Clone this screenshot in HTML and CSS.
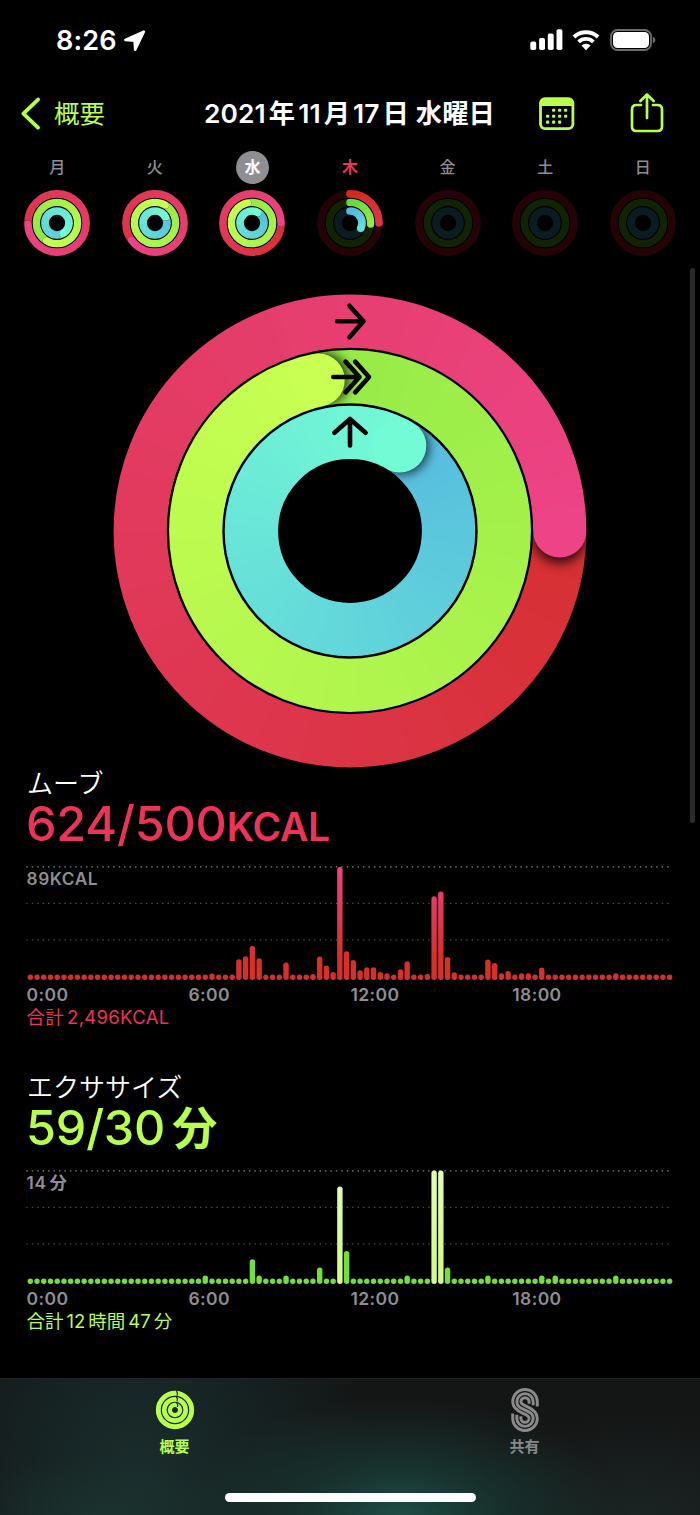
FILE: index.html
```html
<!DOCTYPE html>
<html lang="ja">
<head>
    <meta charset="utf-8">
    <meta name="viewport" content="width=device-width, initial-scale=1.0">
    <title>アクティビティ</title>
    <link rel="stylesheet" href="styles.css">
</head>
<body>
    <!-- Status bar -->
    <div class="status-bar">
        <span class="clock">8:26</span>
        <svg class="location" width="24" height="24" viewBox="0 0 24 24"><path d="M20.8 3.6 L2.4 12 L11.6 12.8 L12.2 21.6 Z" fill="#fff" stroke="#fff" stroke-width="2.6" stroke-linejoin="round"/></svg>
        <svg class="signal" width="34" height="22" viewBox="0 0 34 22" fill="#fff">
            <rect x="0.3" y="12.6" width="5.9" height="8.4" rx="1.8"/>
            <rect x="9.1" y="9" width="5.9" height="12" rx="1.8"/>
            <rect x="17.8" y="4.6" width="5.9" height="16.4" rx="1.8"/>
            <rect x="26.5" y="0.3" width="5.9" height="20.7" rx="1.8"/>
        </svg>
        <svg class="wifi" width="28" height="22" viewBox="0 0 28 22">
            <path d="M2 8 A17.5 17.5 0 0 1 26 8" fill="none" stroke="#fff" stroke-width="4"/>
            <path d="M6.6 12.8 A10.8 10.8 0 0 1 21.4 12.8" fill="none" stroke="#fff" stroke-width="3.8"/>
            <path d="M14 21.2 L9.4 16.6 A6.6 6.6 0 0 1 18.6 16.6 Z" fill="#fff"/>
        </svg>
        <svg class="battery" width="46" height="22" viewBox="0 0 46 22">
            <rect x="1" y="1" width="40" height="20" rx="6.5" fill="none" stroke="#6e6e6e" stroke-width="1.8"/>
            <rect x="3" y="3" width="36" height="16" rx="4.5" fill="#fff"/>
            <path d="M42.8 7.6 Q45.4 8.8 45.4 11 T42.8 14.6 Z" fill="#6e6e6e"/>
        </svg>
    </div>

    <!-- Navigation -->
    <div class="nav">
        <svg class="back" width="22" height="34" viewBox="0 0 22 34"><path d="M18 2.6 L3.4 16.6 L18 30.6" fill="none" stroke="#b9fd4f" stroke-width="3.8" stroke-linecap="round" stroke-linejoin="round"/></svg>
        <span class="back-label">概要</span>
        <span class="date">2021<i></i>年<i></i>11<i></i>月<i></i>17<i></i>日 水曜日</span>
        <svg class="calendar" width="36" height="34" viewBox="0 0 36 34">
            <rect x="1.5" y="1.6" width="32.4" height="30" rx="4.5" fill="none" stroke="#b9fd4f" stroke-width="2.8"/>
            <path d="M1 9 V6 Q1 1 6 1 H29 Q34.4 1 34.4 6 V9 Z" fill="#b9fd4f"/>
            <g fill="#b9fd4f">
                <rect x="13.1" y="11.7" width="3.1" height="3.1" rx=".8"/><rect x="19.1" y="11.7" width="3.1" height="3.1" rx=".8"/><rect x="25.1" y="11.7" width="3.1" height="3.1" rx=".8"/>
                <rect x="7.1" y="17.7" width="3.1" height="3.1" rx=".8"/><rect x="13.1" y="17.7" width="3.1" height="3.1" rx=".8"/><rect x="19.1" y="17.7" width="3.1" height="3.1" rx=".8"/><rect x="25.1" y="17.7" width="3.1" height="3.1" rx=".8"/>
                <rect x="7.1" y="23.6" width="3.1" height="3.1" rx=".8"/><rect x="13.1" y="23.6" width="3.1" height="3.1" rx=".8"/><rect x="19.1" y="23.6" width="3.1" height="3.1" rx=".8"/>
            </g>
        </svg>
        <svg class="share" width="34" height="42" viewBox="0 0 34 42" fill="none" stroke="#b9fd4f" stroke-width="2.7" stroke-linecap="round" stroke-linejoin="round">
            <path d="M11 12 H6.5 Q2 12 2 16.5 V33.5 Q2 38 6.5 38 H27.5 Q32 38 32 33.5 V16.5 Q32 12 27.5 12 H23"/>
            <path d="M17 25 V1.9 M10.4 8 L17 1.5 L23.6 8"/>
        </svg>
    </div>

    <!-- Week strip -->
    <div class="week">
        <div class="day"><span>月</span><svg class="mini" data-rings="628,571,510"></svg></div>
        <div class="day"><span>火</span><svg class="mini" data-rings="594,750,420"></svg></div>
        <div class="day selected"><span>水</span><svg class="mini" data-rings="450,708,390"></svg></div>
        <div class="day today"><span>木</span><svg class="mini" data-rings="90,93,116"></svg></div>
        <div class="day"><span>金</span><svg class="mini" data-rings="0,0,0"></svg></div>
        <div class="day"><span>土</span><svg class="mini" data-rings="0,0,0"></svg></div>
        <div class="day"><span>日</span><svg class="mini" data-rings="0,0,0"></svg></div>
    </div>

    <!-- Main rings -->
    <div class="rings"><svg id="big-rings"></svg></div>

    <!-- Move -->
    <div class="metric move">
        <div class="name">ムーブ</div>
        <div class="value">624/500<span class="unit">KCAL</span></div>
        <div class="chart">
            <svg id="move-chart"></svg>
            <span class="max">89KCAL</span>
        </div>
        <div class="hours"><span>0:00</span><span>6:00</span><span>12:00</span><span>18:00</span></div>
        <div class="total">合計<i></i>2,496KCAL</div>
    </div>

    <!-- Exercise -->
    <div class="metric exercise">
        <div class="name">エクササイズ</div>
        <div class="value">59/30<span class="unit">分</span></div>
        <div class="chart">
            <svg id="exercise-chart"></svg>
            <span class="max">14<i></i>分</span>
        </div>
        <div class="hours"><span>0:00</span><span>6:00</span><span>12:00</span><span>18:00</span></div>
        <div class="total">合計<i></i>12<i></i>時間<i></i>47<i></i>分</div>
    </div>

    <div class="scrollbar"></div>

    <!-- Tab bar -->
    <div class="tab-bar">
        <div class="tab active">
            <svg width="40" height="44" viewBox="-20 -22 40 44" fill="none" stroke="#b9fd4f">
                <circle r="16.7" stroke-width="4.9"/>
                <circle r="10.7" stroke-width="4.7"/>
                <circle r="5.1" stroke-width="4.2"/>
                <path d="M1.4 -19.6 Q3.2 -17 2 -14.2 M1.4 -13.4 Q3.2 -11 2 -8.4 M1.4 -7.6 Q3.4 -5.4 2.4 -3" stroke="#15211f" stroke-width="1.1"/>
            </svg>
            <span>概要</span>
        </div>
        <div class="tab">
            <svg width="28" height="44" viewBox="0 0 27 43" fill="none" stroke="#8a8a8a" stroke-width="2.9">
                <path d="M25.5 18.2 V13.5 A12 12 0 0 0 1.5 13.5 C1.5 20 7 22.8 11.5 24.8 C14.5 26.2 17.5 27.2 17.5 29.5 A4 4 0 0 1 9.5 29.5 V27.6"/>
                <path d="M21.5 16.8 V13.5 A8 8 0 0 0 5.5 13.5 C5.5 18 9 19.5 13.5 21.5 S21.5 25 21.5 29.5 A8 8 0 0 1 5.5 29.5 V26.2"/>
                <path d="M17.5 15.4 V13.5 A4 4 0 0 0 9.5 13.5 C9.5 15.8 12.5 16.8 15.5 18.2 C20 20.2 25.5 23 25.5 29.5 A12 12 0 0 1 1.5 29.5 V24.8"/>
            </svg>
            <span>共有</span>
        </div>
        <div class="home-indicator"></div>
    </div>

    <script src="script.js"></script>
</body>
</html>
```
FILE: styles.css
```css
* {
    box-sizing: border-box;
}
body {
    margin: 0;
    width: 700px;
    height: 1515px;
    position: relative;
    overflow: hidden;
    background: #000;
    color: #fff;
    font-family: Inter, "Noto Sans CJK JP", sans-serif;
}
svg {
    display: block;
    flex: none;
}
/* Thin space between digits and kanji */
i {
    display: inline-block;
    width: 3px;
}
.status-bar {
    display: flex;
    align-items: center;
    height: 80px;
    padding: 0 44px 0 56px;
}
.clock {
    font-size: 27px;
    font-weight: 600;
    width: 67px;
    height: 32px;
    line-height: 34px;
    letter-spacing: 0.2px;
}
.signal {
    margin-left: auto;
}
.wifi {
    margin-left: 8px;
}
.battery {
    margin-left: 10px;
}
.nav {
    display: flex;
    align-items: center;
    height: 67px;
    padding: 0 36px 0 20px;
}
.back-label {
    margin-left: 12px;
    font-size: 25.5px;
    line-height: 36px;
    color: #b9fd4f;
    width: 150px;
}
.date {
    font-size: 26.3px;
    font-weight: 600;
    line-height: 36px;
    white-space: nowrap;
    letter-spacing: 0.12px;
    width: 335px;
}
.share {
    margin-left: auto;
}
.week {
    display: flex;
    height: 110px;
    padding: 4px 8.5px 0;
}
.day {
    flex: 1;
    display: flex;
    flex-direction: column;
    align-items: center;
    gap: 6px;
}
.day span {
    width: 33px;
    height: 33px;
    line-height: 32px;
    border-radius: 50%;
    text-align: center;
    font-size: 16px;
    font-weight: 500;
    color: #8e8e93;
}
.day.selected span {
    background: #8e8e93;
    color: #fff;
    font-weight: 700;
}
.day.today span {
    color: #ea3458;
    font-weight: 700;
}
.mini {
    width: 66px;
    height: 66px;
    overflow: visible;
}
.rings {
    display: flex;
    justify-content: center;
    padding-top: 34px;
    height: 511px;
}
#big-rings {
    width: 480px;
    height: 480px;
}
.metric {
    height: 304px;
    padding: 0 26px;
}
.name {
    font-size: 26px;
    font-weight: 350;
    line-height: 32px;
    height: 31px;
    padding-left: 1px;
}
.value {
    display: flex;
    align-items: baseline;
    height: 52px;
    line-height: 49px;
    font-size: 48.5px;
    font-weight: 500;
    letter-spacing: -0.2px;
}
.unit {
    font-size: 39px;
    font-weight: 600;
}
.exercise .unit {
    font-size: 45px;
    margin-left: 7px;
}
.move .value, .move .total {
    color: #ea3458;
}
.exercise .value, .exercise .total {
    color: #b9fd4f;
}
.chart {
    position: relative;
    height: 114px;
    margin-top: 15px;
}
.chart svg {
    width: 648px;
    height: 114px;
}
.max {
    position: absolute;
    left: 0.6px;
    top: 2px;
    font-size: 17.3px;
    line-height: 22px;
    font-weight: 600;
    color: #8e8e93;
    letter-spacing: 0.55px;
}
.grid-line {
    stroke: #484848;
    stroke-width: 1.4;
    stroke-dasharray: 1.5 3.93;
}
.grid-line.top {
    stroke: #858585;
}
.move .bar {
    fill: url(#move-gradient);
}
.exercise .bar {
    fill: #74de3c;
}
.exercise .bar.high {
    fill: url(#exercise-gradient);
}
.hours {
    display: grid;
    grid-template-columns: repeat(4, 161.9px);
    height: 24px;
    line-height: 30px;
    padding-left: 0.6px;
    font-size: 17.5px;
    font-weight: 600;
    color: #8e8e93;
    letter-spacing: 0.4px;
}
.total {
    font-size: 18.5px;
    line-height: 26px;
    padding-left: 0.5px;
}
.move .total {
    letter-spacing: 0.3px;
}
.scrollbar {
    position: absolute;
    left: 690px;
    top: 268px;
    width: 5px;
    height: 555px;
    border-radius: 3px;
    background: #2b2b2c;
}
.tab-bar {
    position: absolute;
    left: 0;
    top: 1378px;
    width: 700px;
    height: 137px;
    display: flex;
    border-top: 1px solid #222;
    background:
        radial-gradient(ellipse 220px 120px at 400px 137px, #1d4c45 0, rgba(24, 54, 49, 0.8) 45%, rgba(20, 30, 30, 0) 100%),
        radial-gradient(ellipse 150px 60px at 95px 137px, rgba(28, 56, 50, 0.6) 0, rgba(28, 56, 50, 0) 100%),
        radial-gradient(ellipse 260px 320px at 140px 100px, #1a2d2c 0, rgba(23, 38, 38, 0.85) 40%, rgba(20, 24, 24, 0) 90%),
        radial-gradient(ellipse 180px 110px at 640px 137px, #1b2423 0, rgba(20, 22, 22, 0) 100%),
        #141515;
}
.tab {
    flex: 1;
    display: flex;
    flex-direction: column;
    align-items: center;
    padding: 9px 1px 0 0;
    font-size: 15px;
    font-weight: 700;
    line-height: 30px;
    color: #8a8a8a;
}
.tab.active {
    color: #b9fd4f;
}
.home-indicator {
    position: absolute;
    left: 225px;
    top: 114px;
    width: 251px;
    height: 9px;
    border-radius: 5px;
    background: #fff;
}
```
FILE: script.js
```js
var COLORS = {
    move: { from: [209, 42, 29], to: [236, 68, 134], track: "#240305" },
    exercise: { from: [102, 216, 62], to: [200, 255, 82], track: "#122304" },
    stand: { from: [84, 183, 223], to: [115, 251, 213], track: "#0a1c22" }
};
var NAMES = ["move", "exercise", "stand"];
var maskId = 0;

function mix(a, b, t) {
    return "rgb(" + a.map(function (v, i) { return Math.round(v + (b[i] - v) * t); }).join(",") + ")";
}

function point(r, deg) {
    var a = (deg - 90) * Math.PI / 180;
    return [(r * Math.cos(a)).toFixed(3), (r * Math.sin(a)).toFixed(3)];
}

// Arc built of overlapping segments so the colour can follow the angle
function arc(r, w, start, end, c, tone) {
    var out = "";
    for (var d = start; d < end; d += 3) {
        var p = point(r, d), q = point(r, Math.min(d + 20, end));
        out += '<path d="M' + p + "A" + r + " " + r + " 0 0 1 " + q + '" fill="none" stroke="' + mix(c.from, c.to, tone(d)) + '" stroke-width="' + (w + 1) + '"/>';
    }
    return out;
}

function dot(r, w, deg, fill, extra) {
    var p = point(r, deg);
    return '<circle cx="' + p[0] + '" cy="' + p[1] + '" r="' + w / 2 + '" fill="' + fill + '"' + (extra || "") + "/>";
}

function ring(r, w, deg, c, blur) {
    var track = '<circle r="' + r + '" fill="none" stroke="' + c.track + '" stroke-width="' + w + '"/>';
    if (!deg) return track;
    // The mask keeps both edges of the ring smooth
    var id = "ring" + maskId++;
    var box = r + w;
    var open = '<mask id="' + id + '" maskUnits="userSpaceOnUse" x="' + -box + '" y="' + -box + '" width="' + box * 2 + '" height="' + box * 2 + '"><circle r="' + r + '" fill="none" stroke="#fff" stroke-width="' + w + '"/></mask>' +
        '<g mask="url(#' + id + ')">';
    if (deg < 360) {
        var part = function (d) { return d / 200; };
        return track + open + dot(r, w, 0, mix(c.from, c.to, 0)) + arc(r, w, 0, deg, c, part) + dot(r, w, deg, mix(c.from, c.to, part(deg))) + "</g>";
    }
    // Only the last lap is visible, coloured by its share of the whole run
    var full = function (d) { return d / deg; };
    return open +
        arc(r, w, deg - 360, deg, c, full) +
        dot(r, w, deg + blur * 0.3, "#000", ' fill-opacity=".75" style="filter:blur(' + blur + 'px)"') +
        arc(r, w, deg - 90, deg, c, full) +
        dot(r, w, deg, mix(c.from, c.to, 1)) + "</g>";
}

function drawRings(svg, size, radii, widths, degs, blur, extra) {
    svg.setAttribute("viewBox", [-size / 2, -size / 2, size, size].join(" "));
    svg.innerHTML = NAMES.map(function (n, i) {
        return ring(radii[i], widths[i], degs[i], COLORS[n], blur);
    }).join("") + (extra || "");
}

// Direction arrows at the top of the three big rings
var arrows = '<g fill="none" stroke="#000" stroke-width="4.6" stroke-linecap="round" stroke-linejoin="round">' +
    '<path d="M-13 -209.8H13.5M-.6 -225.2L13.5 -209.8L-.6 -193.8"/>' +
    '<path d="M-16.7 -154H9.5M-4.5 -169.4L9.5 -154L-4.5 -138.6M5.2 -169.4L19 -154L5.2 -138.6"/>' +
    '<path d="M0 -85.6V-112M-15.6 -98.2L0 -112L15.6 -98.2"/></g>';

drawRings(document.getElementById("big-rings"), 480, [209.8, 154.3, 98.6], [53.2, 53.2, 53.4], [450, 708.1, 390.2], 5.5, arrows);

document.querySelectorAll(".mini").forEach(function (svg) {
    drawRings(svg, 66, [29.1, 20.6, 12], [7.6, 7.4, 7.7], svg.dataset.rings.split(",").map(Number), 0.6);
});

// Quarter-hour bars, index: height in px
var move = { 27: 6.3, 31: 20.7, 32: 23.7, 33: 34, 34: 21.7, 38: 17.5, 42: 6, 43: 23.3, 44: 14.3, 45: 8, 46: 113, 47: 28.7, 48: 20, 49: 9.7, 50: 12.7, 51: 12.7, 52: 8, 53: 6.7, 55: 10.7, 56: 18.7, 59: 5.8, 60: 83.7, 61: 88.3, 62: 23, 63: 7.7, 68: 20.3, 69: 17, 70: 6.7, 71: 9, 73: 6.7, 74: 6.7, 76: 12.3, 87: 6.7 };
var exercise = { 26: 8.3, 33: 24.7, 34: 8.3, 38: 8.3, 43: 16.3, 46: 97.3, 47: 33, 56: 8.3, 60: 113.3, 61: 113.3, 62: 16.3, 68: 8.3, 76: 8.3, 78: 8.3, 87: 8.3 };

function drawChart(name, data, bottom, top) {
    var out = '<defs><linearGradient id="' + name + '-gradient" gradientUnits="userSpaceOnUse" x1="0" y1="113" x2="0" y2="0">' +
        '<stop offset=".2" stop-color="' + bottom + '"/><stop offset="1" stop-color="' + top + '"/></linearGradient></defs>';
    [0.9, 37.4, 73.9].forEach(function (y, i) {
        out += '<line class="grid-line' + (i ? "" : " top") + '" x1="0.3" y1="' + y + '" x2="646" y2="' + y + '"/>';
    });
    for (var i = 0; i < 96; i++) {
        var h = data[i] || 5.4;
        out += '<rect class="bar' + (h > 60 ? " high" : "") + '" x="' + (1.6 + i * 6.73).toFixed(2) + '" y="' + (113.9 - h).toFixed(2) + '" width="5.4" height="' + h + '" rx="2.7"/>';
    }
    document.getElementById(name + "-chart").innerHTML = out;
}

drawChart("move", move, "#d5302c", "#ec4386");
drawChart("exercise", exercise, "#d5fa8c", "#e3fdb6");
```
